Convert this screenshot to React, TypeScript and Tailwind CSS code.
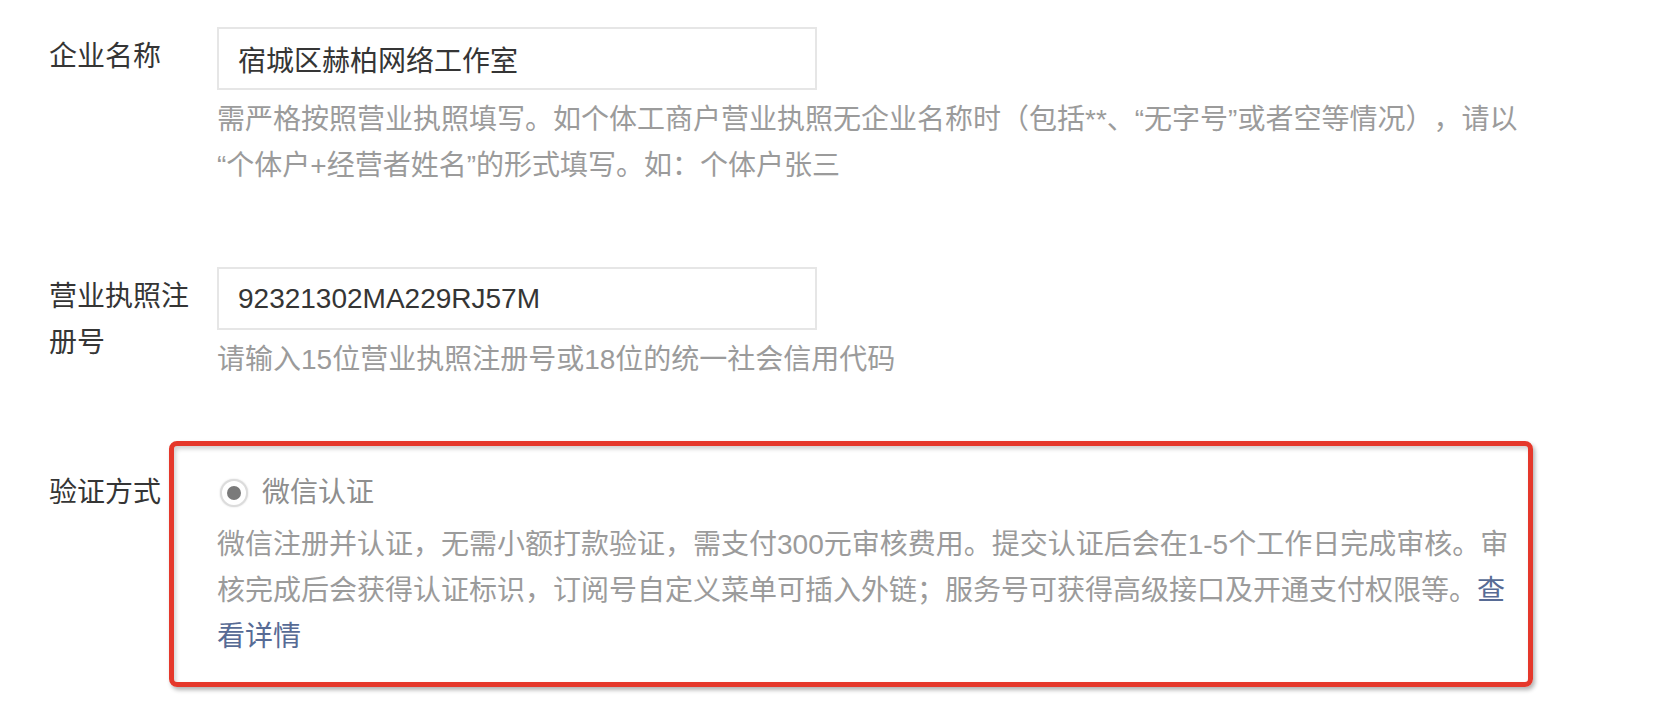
import React from 'react';

const FieldLabel: React.FC<{ children: React.ReactNode; padded?: boolean }> = ({ children, padded }) => (
  <div className={`w-[150px] mr-[18px] shrink-0 text-[#353535] leading-[46px] ${padded ? 'pt-[7px]' : ''}`}>
    {children}
  </div>
);

const TextField: React.FC<{ value: string; hint: React.ReactNode }> = ({ value, hint }) => (
  <div className="w-[1310px]">
    <input
      readOnly
      value={value}
      className="block w-[600px] h-[63px] border-2 border-[#e6e6e6] bg-white pl-[19px] text-[#353535] outline-none"
    />
    <p className="mt-[7px] leading-[46px] text-[#9b9b9b]">{hint}</p>
  </div>
);

export default function App() {
  return (
    <div className="min-h-screen bg-white pl-[49px] pt-[27px] text-[28px] [text-spacing-trim:space-all] font-['Liberation_Sans','Noto_Sans_CJK_SC',sans-serif]">
      <div className="flex">
        <FieldLabel padded>企业名称</FieldLabel>
        <TextField
          value="宿城区赫柏网络工作室"
          hint={
            <>
              需严格按照营业执照填写。如个体工商户营业执照无企业名称时（包括**、“无字号”或者空等情况），请以
              <wbr />
              “个体户+经营者姓名”的形式填写。如：个体户张三
            </>
          }
        />
      </div>

      <div className="flex mt-[78px]">
        <FieldLabel padded>营业执照注册号</FieldLabel>
        <TextField value="92321302MA229RJ57M" hint="请输入15位营业执照注册号或18位的统一社会信用代码" />
      </div>

      <div className="flex mt-[87px]">
        <FieldLabel>验证方式</FieldLabel>
        <div className="relative w-[1310px]">
          {/* annotation frame drawn over the option */}
          <div className="pointer-events-none absolute -left-[48px] -top-[29px] w-[1364px] h-[246px] rounded-[8px] border-[5px] border-[#e5382b] shadow-[2px_3px_4px_rgba(0,0,0,0.3),inset_2px_3px_4px_rgba(0,0,0,0.18)]" />
          <div className="flex items-center h-[46px]">
            <span className="ml-[3px] flex h-[28px] w-[28px] items-center justify-center rounded-full border-2 border-[#dcdcdc] bg-white shadow-[0_0_2px_rgba(0,0,0,0.15)]">
              <span className="h-[14px] w-[14px] rounded-full bg-[#7a7a7a]" />
            </span>
            <span className="ml-[14px] text-[#8e8e8e]">微信认证</span>
          </div>
          <p className="mt-[6px] leading-[46px] text-[#9b9b9b]">
            微信注册并认证，无需小额打款验证，需支付300元审核费用。提交认证后会在1-5个工作日完成审核。审核完成后会获得认证标识，订阅号自定义菜单可插入外链；服务号可获得高级接口及开通支付权限等。
            <a href="#" className="text-[#576b95]">查看详情</a>
          </p>
        </div>
      </div>
    </div>
  );
}
